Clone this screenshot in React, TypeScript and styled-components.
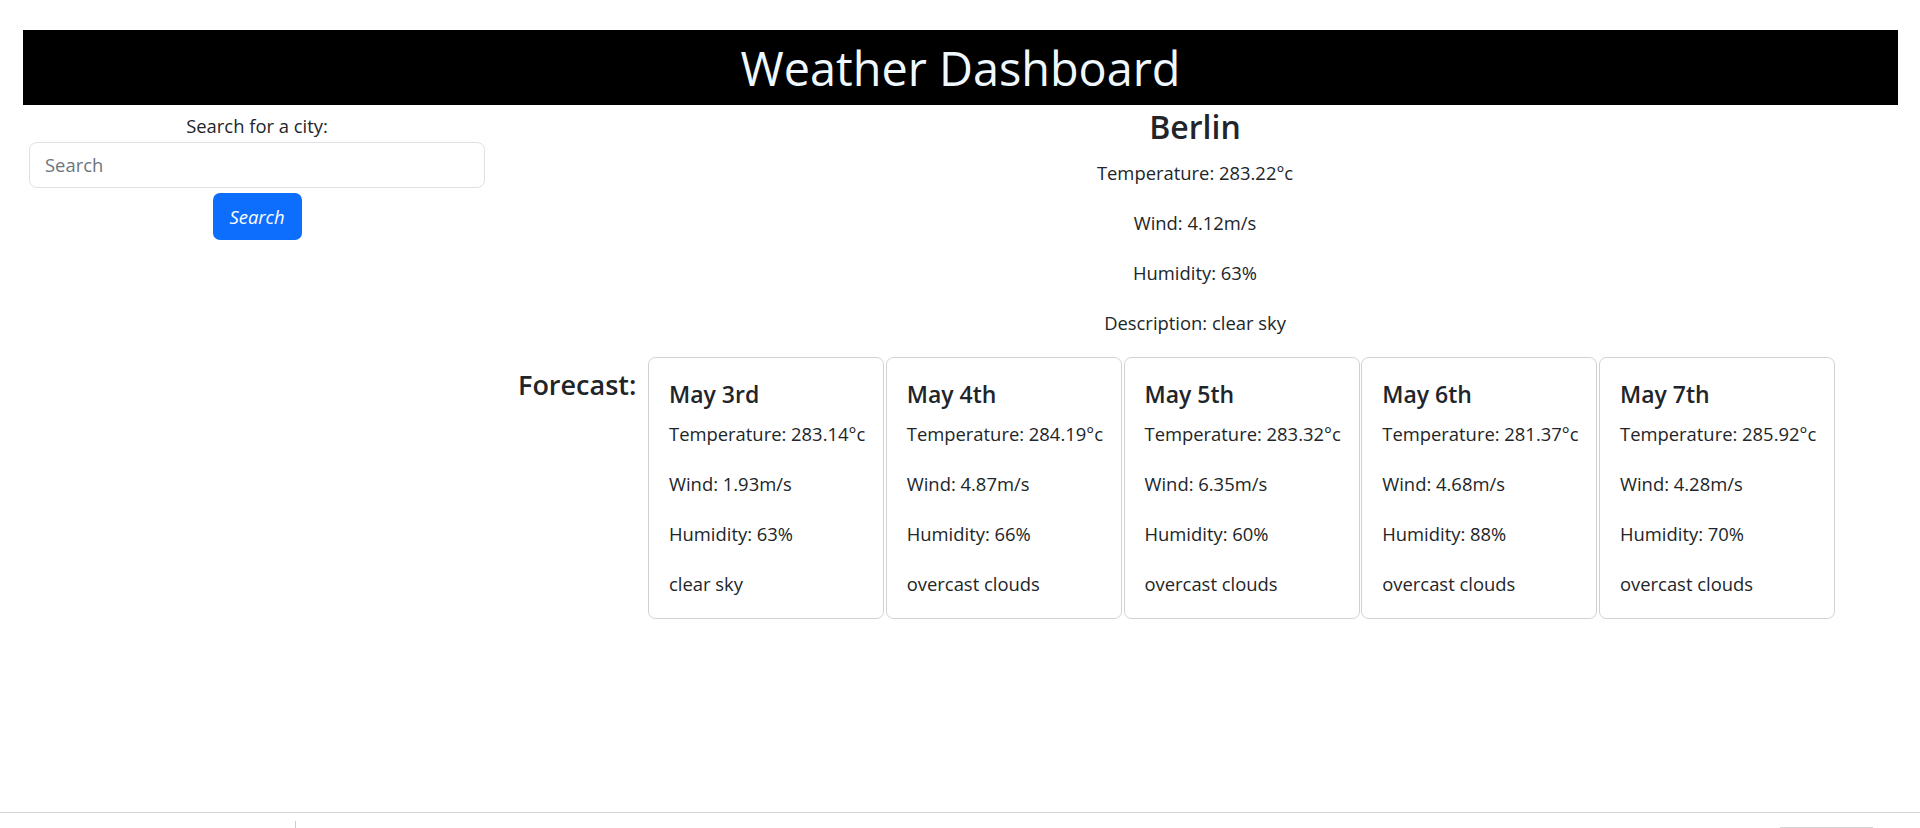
import React from "react";
import styled, { createGlobalStyle } from "styled-components";

const GlobalStyle = createGlobalStyle`
  html, body {
    margin: 0;
    padding: 0;
    background: #ffffff;
  }
  body {
    font-family: "Open Sans", "Noto Sans", sans-serif;
    font-size: 18.4px;
    line-height: 30px;
    color: #212529;
  }
  *, *::before, *::after {
    box-sizing: border-box;
  }
`;

const Page = styled.div`
  display: flex;
  flex-direction: column;
  min-height: 100vh;
`;

const Header = styled.header`
  margin: 30px 22px 0 23px;
  height: 75px;
  background: #000000;
  display: flex;
  align-items: center;
  justify-content: center;
`;

const Title = styled.h1`
  margin: 0;
  font-size: 46.8px;
  font-weight: 400;
  line-height: 60px;
  color: #f0f8ff;
`;

const Main = styled.main`
  display: grid;
  grid-template-columns: 469px 1fr;
  margin: 0 22px 0 23px;
`;

const SearchPanel = styled.section`
  width: 456px;
  margin-left: 6px;
  padding-top: 6px;
  display: flex;
  flex-direction: column;
  align-items: center;
`;

const SearchLabel = styled.label`
  display: block;
  line-height: 30px;
  margin-bottom: 1px;
`;

const SearchInput = styled.input`
  width: 100%;
  height: 46px;
  border: 1px solid #dee2e6;
  border-radius: 8px;
  padding: 0 15px 1px;
  font-family: inherit;
  font-size: 18.4px;
  color: #212529;
  background: #fff;
  outline: none;
  &::placeholder {
    color: #6c757d;
  }
`;

const SearchButton = styled.button`
  margin-top: 5px;
  width: 89px;
  height: 47px;
  border: none;
  border-radius: 7px;
  background: #0d6efd;
  color: #ffffff;
  font-family: inherit;
  font-size: 18.4px;
  font-style: italic;
  padding: 0;
  cursor: pointer;
`;

const CurrentPanel = styled.section`
  text-align: center;
  padding-top: 1px;
`;

const CityName = styled.h3`
  margin: 0 0 10px;
  font-size: 32px;
  font-weight: 600;
  line-height: 42px;
`;

const InfoLine = styled.p`
  margin: 0 0 20px;
  line-height: 30px;
`;

const ForecastRow = styled.div`
  display: flex;
  align-items: flex-start;
  padding-left: 26px;
  margin-top: -1px;
`;

const ForecastLabel = styled.h4`
  width: 130px;
  flex: 0 0 130px;
  margin: 10px 0 0;
  font-size: 27px;
  font-weight: 600;
  line-height: 36px;
  text-align: left;
  white-space: nowrap;
`;

const CardList = styled.div`
  display: flex;
  gap: 1.75px;
`;

const Card = styled.article`
  width: 236px;
  flex: 0 0 236px;
  border: 1px solid rgba(0, 0, 0, 0.175);
  border-radius: 7.5px;
  padding: 21px 20px 19px;
  text-align: left;
`;

const CardTitle = styled.h5`
  margin: 0 0 10px;
  font-size: 23px;
  font-weight: 600;
  line-height: 30px;
`;

const CardText = styled.p`
  margin: 0 0 20px;
  line-height: 30px;
  white-space: nowrap;
  &:last-child {
    margin-bottom: 0;
  }
`;

const Footer = styled.footer`
  margin-top: auto;
  height: 16px;
  border-top: 1px solid #d6d6d6;
  display: flex;
  align-items: flex-start;
`;

const FooterDivider = styled.span`
  margin: 8px 0 0 295px;
  width: 1px;
  height: 8px;
  background: #cccccc;
`;

const FooterTab = styled.span`
  margin: 14px 47px 0 auto;
  width: 93px;
  height: 2px;
  border-top: 1px solid #d2d2d2;
`;

type Forecast = {
  date: string;
  temp: string;
  wind: string;
  humidity: string;
  desc: string;
};

const forecasts: Forecast[] = [
  { date: "May 3rd", temp: "283.14", wind: "1.93", humidity: "63", desc: "clear sky" },
  { date: "May 4th", temp: "284.19", wind: "4.87", humidity: "66", desc: "overcast clouds" },
  { date: "May 5th", temp: "283.32", wind: "6.35", humidity: "60", desc: "overcast clouds" },
  { date: "May 6th", temp: "281.37", wind: "4.68", humidity: "88", desc: "overcast clouds" },
  { date: "May 7th", temp: "285.92", wind: "4.28", humidity: "70", desc: "overcast clouds" },
];

export default function App() {
  return (
    <Page>
      <GlobalStyle />
      <Header>
        <Title>Weather Dashboard</Title>
      </Header>
      <Main>
        <SearchPanel>
          <SearchLabel htmlFor="city">Search for a city:</SearchLabel>
          <SearchInput id="city" type="text" placeholder="Search" />
          <SearchButton type="button">Search</SearchButton>
        </SearchPanel>
        <CurrentPanel>
          <CityName>Berlin</CityName>
          <InfoLine>Temperature: 283.22°c</InfoLine>
          <InfoLine>Wind: 4.12m/s</InfoLine>
          <InfoLine>Humidity: 63%</InfoLine>
          <InfoLine>Description: clear sky</InfoLine>
          <ForecastRow>
            <ForecastLabel>Forecast:</ForecastLabel>
            <CardList>
              {forecasts.map((f) => (
                <Card key={f.date}>
                  <CardTitle>{f.date}</CardTitle>
                  <CardText>Temperature: {f.temp}°c</CardText>
                  <CardText>Wind: {f.wind}m/s</CardText>
                  <CardText>Humidity: {f.humidity}%</CardText>
                  <CardText>{f.desc}</CardText>
                </Card>
              ))}
            </CardList>
          </ForecastRow>
        </CurrentPanel>
      </Main>
      <Footer>
        <FooterDivider />
        <FooterTab />
      </Footer>
    </Page>
  );
}
